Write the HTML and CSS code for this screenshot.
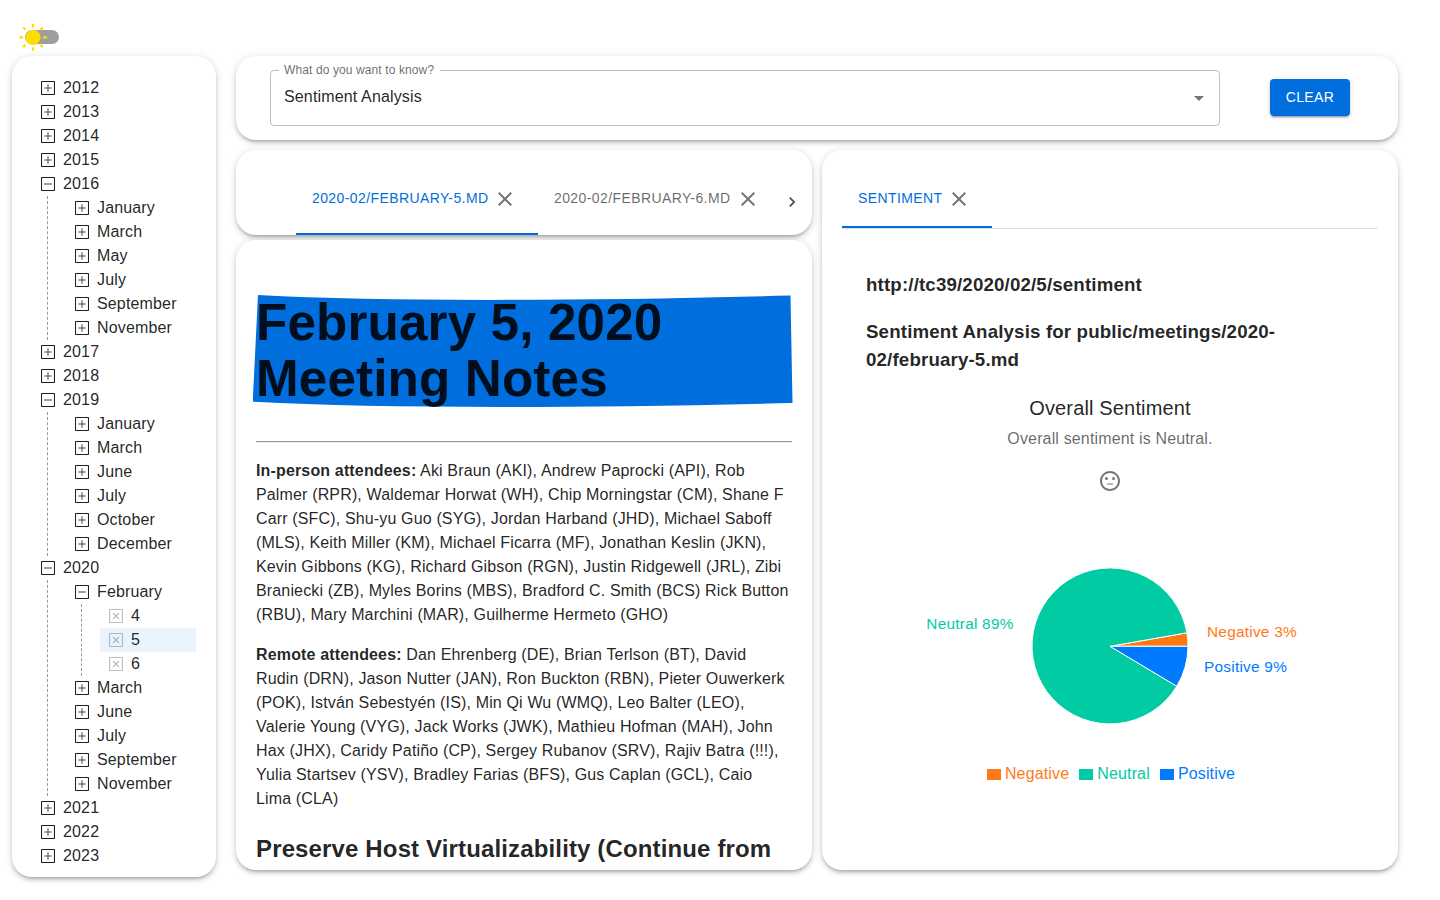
FILE: index.html
```
<!DOCTYPE html>
<html lang="en">
<head>
<meta charset="utf-8">
<title>Meeting Notes</title>
<link rel="stylesheet" href="styles.css">
</head>
<body>
<svg class="defs" width="0" height="0">
  <symbol id="plus" viewBox="0 0 14 14"><rect x=".5" y=".5" width="13" height="13" rx=".4" fill="none" stroke="currentColor" stroke-width="1.100"/><path d="M3.200 7h7.600M7 3.200v7.600" stroke="currentColor" stroke-width="1.100" opacity=".8"/></symbol>
  <symbol id="minus" viewBox="0 0 14 14"><rect x=".5" y=".5" width="13" height="13" rx=".4" fill="none" stroke="currentColor" stroke-width="1.100"/><path d="M3.200 7h7.600" stroke="currentColor" stroke-width="1.100" opacity=".8"/></symbol>
  <symbol id="boxx" viewBox="0 0 14 14"><rect x=".5" y=".5" width="13" height="13" rx=".4" fill="none" stroke="currentColor" stroke-width="1.100"/><path d="M4 4l6 6M10 4l-6 6" stroke="currentColor" stroke-width="1.100"/></symbol>
  <symbol id="close" viewBox="0 0 24 24"><path d="M19 6.41 17.59 5 12 10.59 6.41 5 5 6.41 10.59 12 5 17.59 6.41 19 12 13.41 17.59 19 19 17.59 13.41 12z"/></symbol>
</svg>

<header class="mode">
  <svg class="switch" width="44" height="30" viewBox="18 22 44 30">
    <rect x="25" y="30" width="34" height="14" rx="7" fill="#9e9e9e"/>
    <circle cx="33" cy="37.3" r="7.6" fill="#ffdd00"/>
    <path d="M33 23.8v3.6M33 47.2v3.6M19.4 37.3H23M43 37.3h3.8M23.2 27.5l2.2 2.2M40.4 29.7l2.2-2.2M23.2 47.1l2.2-2.2M40.4 44.9l2.2 2.2" stroke="#ffdd00" stroke-width="2.3" fill="none"/>
  </svg>
</header>

<main class="layout">
  <nav class="card sidebar">
    <div class="item"><svg><use href="#plus"/></svg>2012</div>
    <div class="item"><svg><use href="#plus"/></svg>2013</div>
    <div class="item"><svg><use href="#plus"/></svg>2014</div>
    <div class="item"><svg><use href="#plus"/></svg>2015</div>
    <div class="item"><svg><use href="#minus"/></svg>2016</div>
    <div class="group">
      <div class="item"><svg><use href="#plus"/></svg>January</div>
      <div class="item"><svg><use href="#plus"/></svg>March</div>
      <div class="item"><svg><use href="#plus"/></svg>May</div>
      <div class="item"><svg><use href="#plus"/></svg>July</div>
      <div class="item"><svg><use href="#plus"/></svg>September</div>
      <div class="item"><svg><use href="#plus"/></svg>November</div>
    </div>
    <div class="item"><svg><use href="#plus"/></svg>2017</div>
    <div class="item"><svg><use href="#plus"/></svg>2018</div>
    <div class="item"><svg><use href="#minus"/></svg>2019</div>
    <div class="group">
      <div class="item"><svg><use href="#plus"/></svg>January</div>
      <div class="item"><svg><use href="#plus"/></svg>March</div>
      <div class="item"><svg><use href="#plus"/></svg>June</div>
      <div class="item"><svg><use href="#plus"/></svg>July</div>
      <div class="item"><svg><use href="#plus"/></svg>October</div>
      <div class="item"><svg><use href="#plus"/></svg>December</div>
    </div>
    <div class="item"><svg><use href="#minus"/></svg>2020</div>
    <div class="group">
      <div class="item"><svg><use href="#minus"/></svg>February</div>
      <div class="group">
        <div class="item leaf"><svg><use href="#boxx"/></svg>4</div>
        <div class="item leaf selected"><svg><use href="#boxx"/></svg>5</div>
        <div class="item leaf"><svg><use href="#boxx"/></svg>6</div>
      </div>
      <div class="item"><svg><use href="#plus"/></svg>March</div>
      <div class="item"><svg><use href="#plus"/></svg>June</div>
      <div class="item"><svg><use href="#plus"/></svg>July</div>
      <div class="item"><svg><use href="#plus"/></svg>September</div>
      <div class="item"><svg><use href="#plus"/></svg>November</div>
    </div>
    <div class="item"><svg><use href="#plus"/></svg>2021</div>
    <div class="item"><svg><use href="#plus"/></svg>2022</div>
    <div class="item"><svg><use href="#plus"/></svg>2023</div>
  </nav>

  <div class="content">
    <section class="card query">
      <fieldset class="select">
        <legend>What do you want to know?</legend>
        <span class="value">Sentiment Analysis</span>
        <svg width="24" height="24" viewBox="0 0 24 24"><path d="m7 10 5 5 5-5z"/></svg>
      </fieldset>
      <button class="clear">CLEAR</button>
    </section>

    <div class="panels">
      <div class="left">
        <section class="card filetabs">
          <div class="tab active"><span>2020-02/FEBRUARY-5.MD</span><svg><use href="#close"/></svg></div>
          <div class="tab second"><span>2020-02/FEBRUARY-6.MD</span><svg><use href="#close"/></svg></div>
          <svg class="next" width="20" height="20" viewBox="0 0 24 24"><path d="M10 6 8.59 7.41 13.17 12l-4.58 4.59L10 18l6-6z"/></svg>
        </section>
        <article class="card doc">
          <h1>
            <svg class="marker" width="540" height="114" viewBox="253 294 540 114"><path d="M258 295Q440 304.500 790.500 295.500L792.500 403Q440 411.500 252.700 401.700Z" fill="#006edc"/></svg>
            <span>February 5, 2020<br>Meeting Notes</span>
          </h1>
          <hr>
          <p><b>In-person attendees:</b> Aki Braun (AKI), Andrew Paprocki (API), Rob<br>Palmer (RPR), Waldemar Horwat (WH), Chip Morningstar (CM), Shane F<br>Carr (SFC), Shu-yu Guo (SYG), Jordan Harband (JHD), Michael Saboff<br>(MLS), Keith Miller (KM), Michael Ficarra (MF), Jonathan Keslin (JKN),<br>Kevin Gibbons (KG), Richard Gibson (RGN), Justin Ridgewell (JRL), Zibi<br>Braniecki (ZB), Myles Borins (MBS), Bradford C. Smith (BCS) Rick Button<br>(RBU), Mary Marchini (MAR), Guilherme Hermeto (GHO)</p>
          <p><b>Remote attendees:</b> Dan Ehrenberg (DE), Brian Terlson (BT), David<br>Rudin (DRN), Jason Nutter (JAN), Ron Buckton (RBN), Pieter Ouwerkerk<br>(POK), István Sebestyén (IS), Min Qi Wu (WMQ), Leo Balter (LEO),<br>Valerie Young (VYG), Jack Works (JWK), Mathieu Hofman (MAH), John<br>Hax (JHX), Caridy Patiño (CP), Sergey Rubanov (SRV), Rajiv Batra (!!!),<br>Yulia Startsev (YSV), Bradley Farias (BFS), Gus Caplan (GCL), Caio<br>Lima (CLA)</p>
          <h2>Preserve Host Virtualizability (Continue from</h2>
        </article>
      </div>

      <section class="card result">
        <div class="resulttabs"><div class="tab active">SENTIMENT<svg><use href="#close"/></svg></div></div>
        <div class="body">
          <h3>http://tc39/2020/02/5/sentiment</h3>
          <h3>Sentiment Analysis for public/meetings/2020-<br>02/february-5.md</h3>
          <div class="overall">Overall Sentiment</div>
          <div class="summary">Overall sentiment is Neutral.</div>
          <svg class="face" width="24" height="24" viewBox="0 0 24 24"><path d="M9 14h6v2H9z" opacity=".5"/><circle cx="15.500" cy="9.500" r="1.500"/><circle cx="8.500" cy="9.500" r="1.500"/><path d="M11.990 2C6.470 2 2 6.480 2 12s4.470 10 9.990 10C17.520 22 22 17.520 22 12S17.520 2 11.990 2zM12 20c-4.420 0-8-3.580-8-8s3.580-8 8-8 8 3.580 8 8-3.580 8-8 8z"/></svg>
          <svg class="pie" width="400" height="180" viewBox="910 556 400 180">
            <g stroke="#fff" stroke-width="1">
              <path d="M1110 646.300H1188A78 78 0 0 0 1186.900 632.800Z" fill="#ff7a17"/>
              <path d="M1110 646.300L1186.900 632.800A78 78 0 1 0 1176.800 686.200Z" fill="#00cba2"/>
              <path d="M1110 646.300L1176.800 686.200A78 78 0 0 0 1188 646.300Z" fill="#007bff"/>
            </g>
            <text x="1207" y="637" fill="#ff7a17">Negative 3%</text>
            <text x="926.300" y="629" fill="#00cba2">Neutral 89%</text>
            <text x="1204" y="672" fill="#007bff">Positive 9%</text>
          </svg>
          <div class="legend">
            <span class="neg">Negative</span><span class="neu">Neutral</span><span class="pos">Positive</span>
          </div>
        </div>
      </section>
    </div>
  </div>
</main>
</body>
</html>
```
FILE: styles.css
```
* { box-sizing: border-box; }
body {
  margin: 0;
  height: 900px;
  overflow: hidden;
  background: #fff;
  color: rgba(0, 0, 0, .87);
  font: 16px/24px "Liberation Sans", Arial, sans-serif;
  letter-spacing: .15px;
}
svg { display: block; flex: none; fill: currentColor; }
.defs { position: absolute; }
.mode { height: 56px; padding: 22px 0 0 18px; }
.layout { display: flex; gap: 20px; padding-left: 12px; align-items: flex-start; }
.card {
  background: #fff;
  border-radius: 20px;
  box-shadow: 0 3px 3px -2px rgba(0, 0, 0, .2), 0 3px 4px 0 rgba(0, 0, 0, .14), 0 1px 8px 0 rgba(0, 0, 0, .12);
}

.sidebar { width: 204px; height: 821px; padding: 20px; }
.item { display: flex; align-items: center; height: 24px; padding-left: 9px; gap: 8px; }
.item svg { width: 14px; height: 14px; }
.leaf svg { opacity: .3; }
.selected { background: rgba(0, 110, 220, .08); }
.group { margin-left: 15px; padding-left: 18px; border-left: 1px dashed rgba(0, 0, 0, .4); }

.content { width: 1162px; display: flex; flex-direction: column; gap: 10px; }
.query { height: 84px; display: flex; padding: 0 48px 0 34px; justify-content: space-between; }
.select {
  width: 950px;
  height: 63px;
  margin: 7px 0 0;
  padding: 0 8px;
  border: 1px solid rgba(0, 0, 0, .25);
  border-radius: 4px;
  display: flex;
  justify-content: space-between;
}
.select legend { margin-top: -1px; padding: 0 6px 0 5px; font-size: 12px; line-height: 14px; letter-spacing: .11px; color: rgba(0, 0, 0, .6); }
.value { padding: 8px 0 0 5px; }
.select svg { margin-top: 9px; color: rgba(0, 0, 0, .54); }
.clear {
  width: 80px;
  height: 37px;
  margin-top: 23px;
  padding: 0 0 2px;
  border: 0;
  border-radius: 4px;
  background: #006edc;
  color: #fff;
  font: 14px/24px "Liberation Sans", Arial, sans-serif;
  letter-spacing: .4px;
  box-shadow: 0 3px 1px -2px rgba(0, 0, 0, .2), 0 2px 2px 0 rgba(0, 0, 0, .14), 0 1px 5px 0 rgba(0, 0, 0, .12);
}

.panels { display: flex; gap: 10px; }
.left { width: 576px; display: flex; flex-direction: column; gap: 5px; }
.filetabs { height: 85px; display: flex; padding: 20px 0 0 60px; }
.tab {
  display: flex;
  align-items: center;
  justify-content: space-between;
  padding: 0 21px 8px 16px;
  font-size: 14px;
  letter-spacing: .4px;
  color: rgba(0, 0, 0, .6);
  white-space: nowrap;
}
.filetabs .tab { width: 242px; height: 65px; }
.filetabs span { padding-bottom: 2px; }
.tab svg { width: 24px; height: 24px; color: rgba(0, 0, 0, .54); }
.tab.active { color: #006edc; border-bottom: 2px solid #006edc; }
.filetabs .active { padding-bottom: 6px; }
.filetabs .second { padding-right: 20px; }
.next { margin: 21.500px 0 0 2px; color: rgba(0, 0, 0, .7); }

.doc { height: 630px; padding: 55px 20px 0; overflow: hidden; white-space: nowrap; }
h1 { position: relative; margin: 0; font-size: 51.2px; line-height: 56px; }
h1 span { position: relative; }
.marker { position: absolute; left: -3px; top: -1px; }
hr { margin: 34px 0 16px; height: 2px; border: 0; border-top: 1px solid #9a9a9a; border-bottom: 1px solid #eee; }
p { margin: 0 0 16px; }
h2 { margin: 24px 0 0; font-size: 24px; line-height: 28px; letter-spacing: .14px; }

.result { width: 576px; height: 720px; padding: 20px; }
.resulttabs { height: 59px; border-bottom: 1px solid rgba(0, 0, 0, .12); }
.resulttabs .tab { width: 150px; height: 58px; padding-bottom: 0; }
.resulttabs svg { margin-top: 1px; }
.body { display: flex; flex-direction: column; align-items: center; padding: 42px 24px 0; }
h3 { align-self: flex-start; margin: 0 0 19px; font-size: 18.72px; line-height: 28px; white-space: nowrap; }
.overall { margin-top: -1px; font-size: 20px; line-height: 32px; }
.summary { margin-top: 3px; color: rgba(0, 0, 0, .6); }
.face { margin-top: 18px; color: rgba(0, 0, 0, .54); }
.pie { margin-top: 63px; }
.pie text { font-size: 15.4px; letter-spacing: .24px; }
.legend { display: flex; gap: 10px; margin: 26px 0 0 2px; }
.legend span { display: flex; align-items: center; gap: 4px; }
.legend span::before { content: ""; width: 14px; height: 11px; margin-top: 1px; background: currentColor; }
.neg { color: #ff7a17; }
.neu { color: #00cba2; }
.pos { color: #007bff; }
```
